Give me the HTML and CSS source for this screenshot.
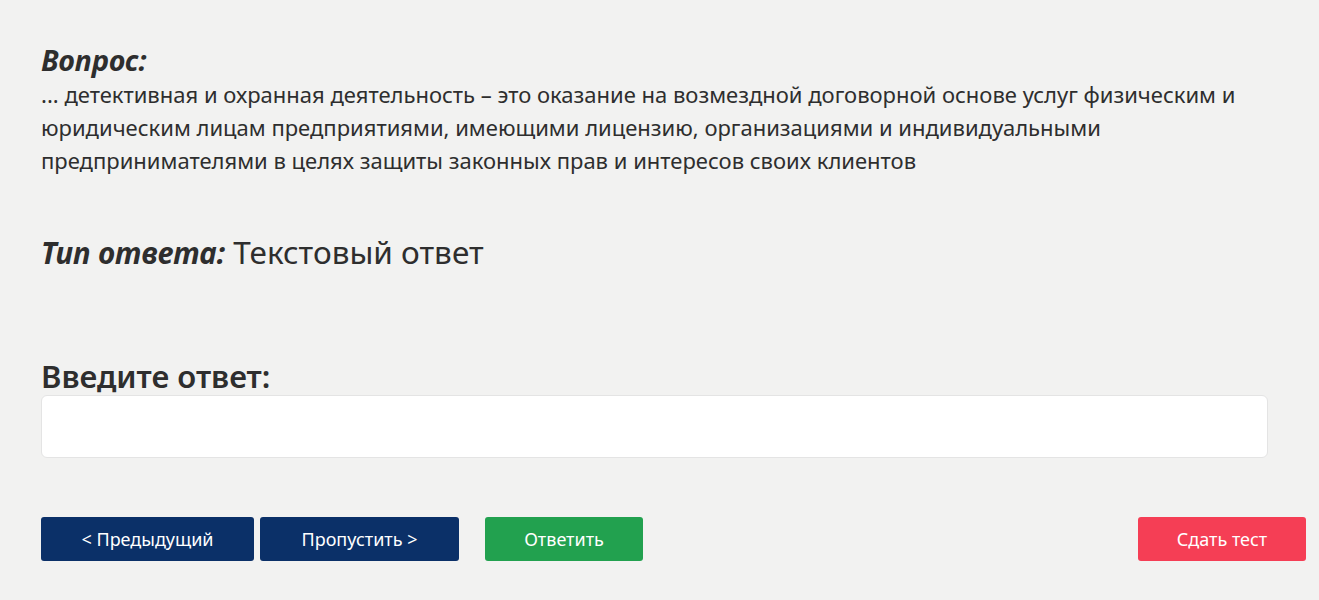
FILE: index.html
```html
<!DOCTYPE html>
<html lang="ru">
  <head>
    <meta charset="UTF-8" />
    <meta name="viewport" content="width=device-width, initial-scale=1.0" />
    <title>Тест</title>
    <link rel="stylesheet" href="styles.css">
  </head>
  <body>
    <main class="test">
      <section class="question">
        <h2 class="label">Вопрос:</h2>
        <p class="question-text">... детективная и охранная деятельность – это оказание на возмездной договорной основе услуг физическим и юридическим лицам предприятиями, имеющими лицензию, организациями и индивидуальными предпринимателями в целях защиты законных прав и интересов своих клиентов</p>
      </section>
      <section class="answer-type">
        <span class="label-big">Тип ответа:</span> Текстовый ответ
      </section>
      <section class="answer">
        <h3 class="answer-title">Введите ответ:</h3>
        <input class="answer-input" type="text" />
      </section>
      <div class="buttons">
        <button class="btn btn-nav">&lt; Предыдущий</button>
        <button class="btn btn-nav btn-skip">Пропустить &gt;</button>
        <button class="btn btn-answer">Ответить</button>
        <button class="btn btn-finish">Сдать тест</button>
      </div>
    </main>
  </body>
</html>
```

FILE: styles.css
```css
* {
  box-sizing: border-box;
  margin: 0;
  padding: 0;
}

body {
  background-color: #f2f2f1;
  font-family: "Noto Sans", "Open Sans", sans-serif;
  color: #2e2e2e;
}

.test {
  padding: 42px 13px 0 41px;
}

.label {
  font-size: 28.5px;
  font-weight: 700;
  font-style: italic;
  line-height: 36px;
}

.question-text {
  font-size: 22px;
  line-height: 33px;
  padding-right: 20px;
}

.answer-type {
  margin-top: 55px;
  font-size: 31.5px;
  line-height: 40px;
}

.label-big {
  font-size: 29.5px;
  font-weight: 700;
  font-style: italic;
}

.answer {
  margin-top: 84px;
}

.answer-title {
  font-size: 31px;
  font-weight: 600;
  line-height: 38px;
}

.answer-input {
  display: block;
  width: calc(100% - 38px);
  height: 63px;
  background: #fff;
  border: 1px solid #e4e4e4;
  border-radius: 6px;
}

.buttons {
  display: flex;
  margin-top: 59px;
}

.btn {
  height: 44px;
  border: none;
  border-radius: 3px;
  color: #fff;
  font-family: "Noto Sans", sans-serif;
  font-size: 18px;
}

.btn-nav {
  background-color: #0b3068;
  width: 213px;
}

.btn-skip {
  width: 199px;
  margin-left: 6px;
}

.btn-answer {
  background-color: #22a14f;
  width: 158px;
  margin-left: 26px;
}

.btn-finish {
  background-color: #f53e55;
  width: 168px;
  margin-left: auto;
}
```
